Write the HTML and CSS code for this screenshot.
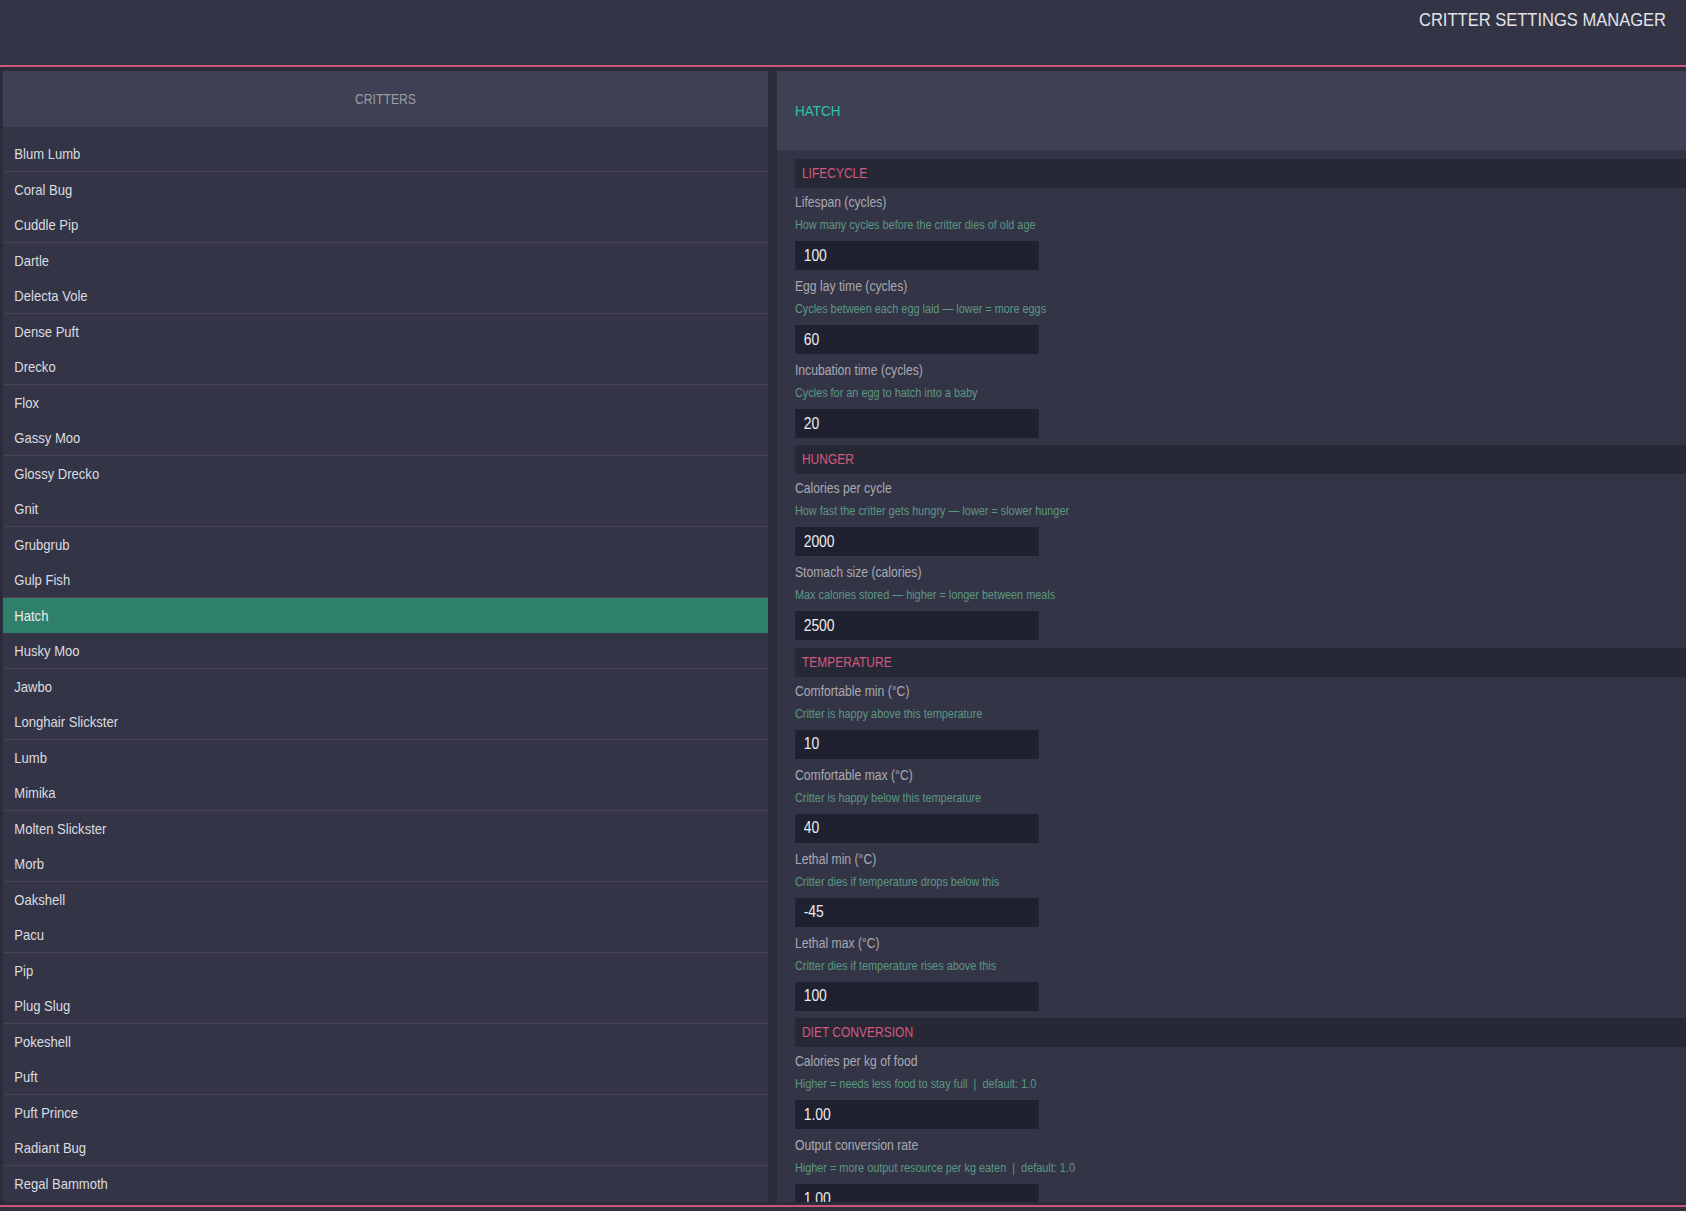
FILE: index.html
```html
<!DOCTYPE html>
<html lang="en">
<head>
<meta charset="utf-8">
<title>Critter Settings Manager</title>
<link rel="stylesheet" href="styles.css">
</head>
<body>
<div class="viewport">
<div class="app">
  <header class="topbar">
    <h1 class="app-title">CRITTER SETTINGS MANAGER</h1>
  </header>
  <main class="main">
    <section class="panel list-panel">
      <div class="panel-head list-head">CRITTERS</div>
      <ul class="critter-list">
        <li class="critter">Blum Lumb</li>
        <li class="critter">Coral Bug</li>
        <li class="critter">Cuddle Pip</li>
        <li class="critter">Dartle</li>
        <li class="critter">Delecta Vole</li>
        <li class="critter">Dense Puft</li>
        <li class="critter">Drecko</li>
        <li class="critter">Flox</li>
        <li class="critter">Gassy Moo</li>
        <li class="critter">Glossy Drecko</li>
        <li class="critter">Gnit</li>
        <li class="critter">Grubgrub</li>
        <li class="critter">Gulp Fish</li>
        <li class="critter selected">Hatch</li>
        <li class="critter">Husky Moo</li>
        <li class="critter">Jawbo</li>
        <li class="critter">Longhair Slickster</li>
        <li class="critter">Lumb</li>
        <li class="critter">Mimika</li>
        <li class="critter">Molten Slickster</li>
        <li class="critter">Morb</li>
        <li class="critter">Oakshell</li>
        <li class="critter">Pacu</li>
        <li class="critter">Pip</li>
        <li class="critter">Plug Slug</li>
        <li class="critter">Pokeshell</li>
        <li class="critter">Puft</li>
        <li class="critter">Puft Prince</li>
        <li class="critter">Radiant Bug</li>
        <li class="critter">Regal Bammoth</li>
      </ul>
    </section>
    <section class="panel detail-panel">
      <div class="panel-head detail-head">HATCH</div>
      <div class="detail-body">
        <div class="group">
          <div class="group-title">LIFECYCLE</div>
          <div class="field">
            <label class="field-label">Lifespan (cycles)</label>
            <div class="field-desc">How many cycles before the critter dies of old age</div>
            <input class="field-input" type="text" value="100">
          </div>
          <div class="field">
            <label class="field-label">Egg lay time (cycles)</label>
            <div class="field-desc">Cycles between each egg laid — lower = more eggs</div>
            <input class="field-input" type="text" value="60">
          </div>
          <div class="field">
            <label class="field-label">Incubation time (cycles)</label>
            <div class="field-desc">Cycles for an egg to hatch into a baby</div>
            <input class="field-input" type="text" value="20">
          </div>
        </div>
        <div class="group">
          <div class="group-title">HUNGER</div>
          <div class="field">
            <label class="field-label">Calories per cycle</label>
            <div class="field-desc">How fast the critter gets hungry — lower = slower hunger</div>
            <input class="field-input" type="text" value="2000">
          </div>
          <div class="field">
            <label class="field-label">Stomach size (calories)</label>
            <div class="field-desc">Max calories stored — higher = longer between meals</div>
            <input class="field-input" type="text" value="2500">
          </div>
        </div>
        <div class="group">
          <div class="group-title">TEMPERATURE</div>
          <div class="field">
            <label class="field-label">Comfortable min (°C)</label>
            <div class="field-desc">Critter is happy above this temperature</div>
            <input class="field-input" type="text" value="10">
          </div>
          <div class="field">
            <label class="field-label">Comfortable max (°C)</label>
            <div class="field-desc">Critter is happy below this temperature</div>
            <input class="field-input" type="text" value="40">
          </div>
          <div class="field">
            <label class="field-label">Lethal min (°C)</label>
            <div class="field-desc">Critter dies if temperature drops below this</div>
            <input class="field-input" type="text" value="-45">
          </div>
          <div class="field">
            <label class="field-label">Lethal max (°C)</label>
            <div class="field-desc">Critter dies if temperature rises above this</div>
            <input class="field-input" type="text" value="100">
          </div>
        </div>
        <div class="group">
          <div class="group-title">DIET CONVERSION</div>
          <div class="field">
            <label class="field-label">Calories per kg of food</label>
            <div class="field-desc">Higher = needs less food to stay full &nbsp;|&nbsp; default: 1.0</div>
            <input class="field-input" type="text" value="1.00">
          </div>
          <div class="field">
            <label class="field-label">Output conversion rate</label>
            <div class="field-desc">Higher = more output resource per kg eaten &nbsp;|&nbsp; default: 1.0</div>
            <input class="field-input" type="text" value="1.00">
          </div>
        </div>
      </div>
    </section>
  </main>
  <footer class="bottombar"></footer>
</div>
</div>
</body>
</html>
```

FILE: styles.css
```css
html, body {
  margin: 0;
  padding: 0;
  width: 1686px;
  height: 1211px;
  overflow: hidden;
  background: #2a2c3a;
}

.viewport {
  width: 1686px;
  height: 1211px;
  overflow: hidden;
}

/* The UI is drawn on a 1938px-wide canvas and squeezed horizontally to 1686px */
.app {
  width: 1938px;
  height: 1211px;
  display: flex;
  flex-direction: column;
  transform: scaleX(0.87);
  transform-origin: 0 0;
  font-family: "Liberation Sans", Arial, sans-serif;
  background: #2a2c3a;
}

.topbar {
  height: 65px;
  flex: 0 0 65px;
  box-sizing: content-box;
  background: #333546;
  border-bottom: 2px solid #c8587a;
  display: flex;
  justify-content: flex-end;
  align-items: flex-start;
  padding: 0 23px 0 0;
}

.app-title {
  margin: 8px 0 0 0;
  font-size: 19px;
  line-height: 24px;
  font-weight: normal;
  color: #e4e4e8;
}

.main {
  flex: 1 1 auto;
  min-height: 0;
  display: flex;
  gap: 10.3px;
  padding: 4px 0 3px 3.45px;
}

.panel {
  background: #333546;
  display: flex;
  flex-direction: column;
  min-height: 0;
  overflow: hidden;
}

.list-panel {
  flex: 0 0 879.3px;
}

.detail-panel {
  flex: 1 1 auto;
}

.panel-head {
  background: #3e4153;
  flex: 0 0 auto;
}

.list-head {
  height: 56px;
  display: flex;
  align-items: center;
  justify-content: center;
  font-size: 14px;
  color: #9c9ca6;
}

.critter-list {
  list-style: none;
  margin: 0;
  padding: 9px 0 0 0;
  overflow: hidden;
}

.critter {
  height: 35.5px;
  box-sizing: border-box;
  display: flex;
  align-items: center;
  padding: 0 0 0 13px;
  font-size: 15px;
  color: #dcdce0;
}

.critter:nth-child(odd) {
  border-bottom: 1px solid #4d3f55;
}

.critter.selected {
  background: #2e806b;
  color: #ececec;
  border-bottom-color: #4b4b5e;
}

.detail-head {
  height: 79px;
  display: flex;
  align-items: center;
  padding-left: 20.7px;
  font-size: 15.5px;
  color: #2dc49f;
}

.detail-body {
  padding: 9px 0 0 20.7px;
  overflow: hidden;
}

.group {
  padding-bottom: 0.4px;
}

.group-title {
  height: 29px;
  display: flex;
  align-items: center;
  padding-left: 8px;
  margin-bottom: 5px;
  background: #262836;
  color: #d25a7e;
  font-size: 13.8px;
}

.field {
  display: flex;
  flex-direction: column;
  align-items: flex-start;
  padding-bottom: 7px;
}

.field-label {
  font-size: 14px;
  line-height: 18px;
  color: #a9a9b3;
  margin-bottom: 5px;
}

.field-desc {
  font-size: 12.5px;
  line-height: 18px;
  color: #5c9784;
  margin-bottom: 7px;
  white-space: nowrap;
}

.field-input {
  width: 280.5px;
  height: 29px;
  box-sizing: border-box;
  margin: 0;
  padding: 0 10px;
  border: none;
  outline: none;
  background: #1f2030;
  color: #ececec;
  font-family: "Liberation Sans", Arial, sans-serif;
  font-size: 16px;
}

.bottombar {
  flex: 0 0 4px;
  height: 4px;
  box-sizing: content-box;
  background: #30323f;
  border-top: 2px solid #c8587a;
}
```
